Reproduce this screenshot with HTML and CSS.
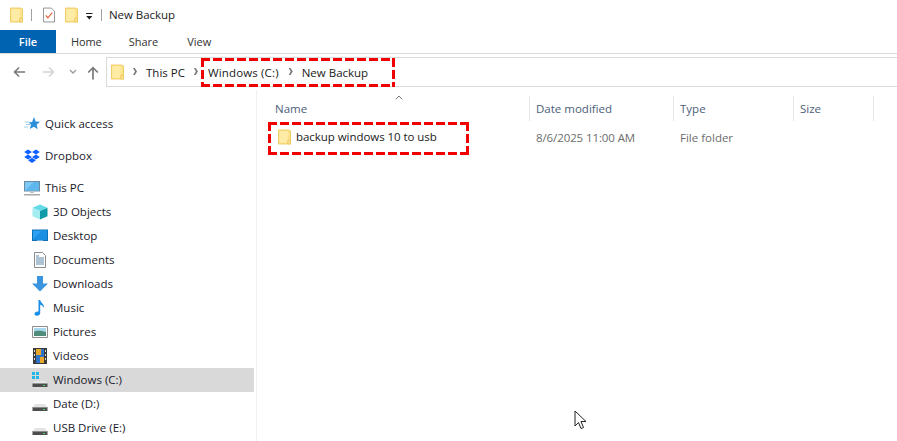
FILE: index.html
```html
<!DOCTYPE html>
<html lang="en">
<head>
<meta charset="utf-8">
<title>New Backup</title>
<link rel="stylesheet" href="styles.css">
</head>
<body>
<svg class="defs" width="0" height="0" aria-hidden="true">
  <symbol id="folder" viewBox="0 0 14 16">
    <path d="M.5.5h10.5l2.500 1v14H.5z" fill="#fde48c" stroke="#eec75c"/>
    <path d="M1.500 1.500h9v13h-9z" fill="#feeca6"/>
    <path d="M10.500 11.500h3v4h-3z" fill="#fde392" stroke="#eec75c"/>
  </symbol>
  <symbol id="drive" viewBox="0 0 16 16">
    <path d="M3 8h10l2.500 3.500h-15z" fill="#e4e4e4"/>
    <path d="M.5 11h15v4H.5z" fill="#4d4d4d"/>
    <path d="M1 11h14v1H1z" fill="#8a8a8a"/>
    <path d="M11 13h2v1h-2z" fill="#3ddc5a"/>
  </symbol>
</svg>

<div class="title-bar">
  <svg class="ico-folder"><use href="#folder"/></svg>
  <span class="sep sep-a"></span>
  <svg class="ico-check" viewBox="0 0 13 16">
    <path d="M.5.5h8.500l3.500 3.500v11.500H.5z" fill="#fff" stroke="#8c8c8c"/>
    <path d="M3 8.500l2.300 2.500L10 5.500" fill="none" stroke="#e2653a" stroke-width="1.300"/>
  </svg>
  <svg class="ico-folder ico-folder-b"><use href="#folder"/></svg>
  <svg class="ico-qat" viewBox="0 0 7 7">
    <path d="M0 0h6.500v1H0zM.2 3h6.200L3.300 6.500z" fill="#222"/>
  </svg>
  <span class="sep sep-b"></span>
  <span class="title-text">New Backup</span>
</div>

<div class="ribbon">
  <div class="tab tab-file">File</div>
  <div class="tab tab-home">Home</div>
  <div class="tab tab-share">Share</div>
  <div class="tab tab-view">View</div>
</div>

<div class="address-row">
  <svg class="nav-ico nav-back" viewBox="0 0 14 12"><path d="M13 6H2M6.500 1.200L1.700 6l4.800 4.800" fill="none" stroke="#7a7a7a" stroke-width="1.700"/></svg>
  <svg class="nav-ico nav-fwd" viewBox="0 0 14 12"><path d="M1 6h11M7.500 1.200L12.300 6l-4.800 4.800" fill="none" stroke="#d4d4d4" stroke-width="1.700"/></svg>
  <svg class="nav-chev" viewBox="0 0 8 5"><path d="M1 1l3 3 3-3" fill="none" stroke="#9a9a9a" stroke-width="1.300"/></svg>
  <svg class="nav-ico nav-up" viewBox="0 0 12 14"><path d="M6 13.500V2M1.200 6.500L6 1.700l4.800 4.800" fill="none" stroke="#7a7a7a" stroke-width="1.700"/></svg>
  <div class="address-box">
    <svg class="ico-folder"><use href="#folder"/></svg>
    <span class="crumb-arrow arrow-a"></span>
    <span class="crumb crumb-pc">This PC</span>
    <span class="crumb-arrow arrow-b"></span>
    <span class="crumb crumb-win">Windows (C:)</span>
    <span class="crumb-arrow arrow-c"></span>
    <span class="crumb crumb-new">New Backup</span>
  </div>
</div>

<div class="main">
  <nav class="nav">
    <div class="nav-row root">
      <svg class="tree-ico" viewBox="0 0 16 16"><path d="M10 1l1.700 4.500 4.300.3-3.400 2.900 1.200 4.600-3.900-2.500L5.800 13l1.200-4.400L4.500 6.500l3.600-.4z" fill="#2b8fd9"/><path d="M1 6h4M2 8.500h4M0 11h4" stroke="#9ccbea"/></svg>
      <span>Quick access</span>
    </div>
    <div class="nav-row root gap">
      <svg class="tree-ico" viewBox="0 0 16 16" fill="#0f62fe"><path d="M4 1.500L.2 4 4 6.500 8 4zM12 1.500L8 4l4 2.500L15.800 4zM4 6.500L.2 9 4 11.500 8 9zM12 6.500L8 9l4 2.500L15.800 9zM4 12.300L8 15l4-2.700-4-2.500z"/></svg>
      <span>Dropbox</span>
    </div>
    <div class="nav-row root gap">
      <svg class="tree-ico" viewBox="0 0 16 16"><path d="M0 1h16v10.500H0z" fill="#6c8ba3"/><path d="M1 2h14v8.500H1z" fill="#7cc8f6"/><path d="M1 10.500L10 2h5v8.500z" fill="#5fb6ec"/><path d="M6 11.500h4v1.500H6z" fill="#b8c4cc"/><path d="M0 14h16v1.500H0z" fill="#a8a8a8"/></svg>
      <span>This PC</span>
    </div>
    <div class="nav-row">
      <svg class="tree-ico" viewBox="0 0 16 16"><path d="M8 .5l7.500 3.200L8 7 .5 3.700z" fill="#63dbe6"/><path d="M.5 3.700L8 7v8.500L.5 12.300z" fill="#a3ecef"/><path d="M15.500 3.700L8 7v8.500l7.500-3.200z" fill="#119aa8"/></svg>
      <span>3D Objects</span>
    </div>
    <div class="nav-row">
      <svg class="tree-ico" viewBox="0 0 16 16"><path d="M0 1.500h16v11.500H0z" fill="#0c72b8"/><path d="M1 2.500h14v9H1z" fill="#2aa0f0"/><path d="M1 11.500l9-9h5v9z" fill="#1a8fe3"/><path d="M5 12.500h6v.5H5z" fill="#e6f2fb"/></svg>
      <span>Desktop</span>
    </div>
    <div class="nav-row">
      <svg class="tree-ico" viewBox="0 0 16 16"><path d="M2.500.5h8l3 3v12h-11z" fill="#fff" stroke="#8a8a8a"/><path d="M4 4h3M4 6h8M4 8h8M4 10h8M4 12h8" stroke="#5d88a8"/></svg>
      <span>Documents</span>
    </div>
    <div class="nav-row">
      <svg class="tree-ico" viewBox="0 0 16 16"><path d="M5 0h6v7.500h5L8 15.500 0 7.500h5z" fill="#3a94de"/></svg>
      <span>Downloads</span>
    </div>
    <div class="nav-row">
      <svg class="tree-ico" viewBox="0 0 16 16"><path d="M6.500 0h1.700c.3 3 4.800 4 3.500 8-.5-2-2-3-3.500-3.300V13c0 1.800-1.500 2.800-3.200 2.800C3.300 15.800 2.500 15 2.500 13.800c0-1.700 2-2.800 4-2.300z" fill="#1b8fe8"/></svg>
      <span>Music</span>
    </div>
    <div class="nav-row">
      <svg class="tree-ico" viewBox="0 0 16 16"><path d="M.5 2.500h15v11H.5z" fill="#fff" stroke="#8f8f8f"/><path d="M2 4h12v4H2z" fill="#a9d7ee"/><path d="M2 8c3-2 7-1 12 0v4H2z" fill="#4f8c7a"/></svg>
      <span>Pictures</span>
    </div>
    <div class="nav-row">
      <svg class="tree-ico" viewBox="0 0 16 16"><path d="M1 0h14v16H1z" fill="#3a3a3a"/><path d="M4 1h8v14H4z" fill="#2f74c8"/><path d="M4 1h5v6H4z" fill="#e8a92a"/><path d="M8 9h4v6H8z" fill="#e8a92a"/><path d="M2 2h1v2H2zM2 6h1v2H2zM2 10h1v2H2zM13 2h1v2h-1zM13 6h1v2h-1zM13 10h1v2h-1z" fill="#ddd"/></svg>
      <span>Videos</span>
    </div>
    <div class="nav-row selected">
      <svg class="tree-ico" viewBox="0 0 16 16"><path d="M0 0h3v3H0zM4 0h3v3H4zM0 4h3v3H0zM4 4h3v3H4z" fill="#1fb6e8"/><path d="M3 9h10l2.500 2.500H.5z" fill="#e8e8e8"/><path d="M.5 11.500h15V15H.5z" fill="#4d4d4d"/><path d="M11 13h2v1h-2z" fill="#3ddc5a"/></svg>
      <span>Windows (C:)</span>
    </div>
    <div class="nav-row">
      <svg class="tree-ico"><use href="#drive"/></svg>
      <span>Date (D:)</span>
    </div>
    <div class="nav-row">
      <svg class="tree-ico"><use href="#drive"/></svg>
      <span>USB Drive (E:)</span>
    </div>
  </nav>

  <section class="files">
    <svg class="sort-caret" viewBox="0 0 8 5"><path d="M.8 4.300L4 1l3.200 3.300" fill="none" stroke="#777"/></svg>
    <div class="header-row">
      <div class="col col-name">Name</div>
      <div class="col col-date">Date modified</div>
      <div class="col col-type">Type</div>
      <div class="col col-size">Size</div>
    </div>
    <div class="file-row">
      <div class="cell col-name name-cell">
        <svg class="ico-folder"><use href="#folder"/></svg>
        <span>backup windows 10 to usb</span>
      </div>
      <div class="cell col-date cell-date">8/6/2025 11:00 AM</div>
      <div class="cell col-type cell-type">File folder</div>
    </div>
  </section>
</div>

<div class="mark mark-path"></div>
<div class="mark mark-file"></div>
<svg class="cursor" viewBox="0 0 13 20"><path d="M1 1v15l3.500-3.500 2.500 6 2.500-1-2.500-6h5z" fill="#fff" stroke="#222" stroke-width="1"/></svg>
</body>
</html>
```
FILE: styles.css
```css
* { box-sizing: border-box; }
html, body { margin: 0; padding: 0; }
body {
  width: 897px;
  height: 441px;
  overflow: hidden;
  position: relative;
  background: #fff;
  font-family: "Open Sans", "Noto Sans", sans-serif;
  font-size: 11.5px;
  color: #1a1a1a;
}
svg { display: block; flex: none; }
.defs { position: absolute; }

.ico-folder { width: 13px; height: 16px; }

.title-bar {
  height: 30px;
  display: flex;
  align-items: center;
  padding-left: 10px;
}
.sep { width: 1px; height: 12px; background: #a0a0a0; }
.sep-a { margin-left: 8px; }
.ico-check { width: 12px; height: 16px; margin-left: 11px; }
.ico-folder-b { margin-left: 10px; }
.ico-qat { width: 7px; height: 7px; margin-left: 8px; margin-top: 2px; }
.sep-b { margin-left: 8px; }
.title-text { margin-left: 7px; margin-bottom: 2px; font-size: 11.5px; color: #222; letter-spacing: -0.05px; }

.ribbon {
  height: 24px;
  display: flex;
  border-bottom: 1px solid #dadada;
}
.tab {
  height: 23px;
  display: flex;
  align-items: center;
  color: #333;
  font-size: 11px;
}
.tab-file {
  width: 56px;
  justify-content: center;
  background: #0063b1;
  color: #fff;
  font-weight: 600;
}
.tab-home { margin-left: 15px; letter-spacing: -0.1px; }
.tab-share { margin-left: 27px; }
.tab-view { margin-left: 29px; }

.address-row {
  height: 36px;
  display: flex;
  align-items: center;
  padding: 0 0 1px 13px;
}
.nav-ico { width: 13px; height: 12px; }
.nav-fwd { margin-left: 16px; }
.nav-chev { width: 8px; height: 5px; margin-left: 14px; }
.nav-up { width: 12px; height: 14px; margin-left: 10px; margin-top: 2px; }
.address-box {
  margin-left: 7px;
  flex: 1;
  height: 30px;
  border: 1px solid #d9d9d9;
  border-right: 0;
  display: flex;
  align-items: center;
  padding-left: 4px;
}
.crumb { color: #1a1a1a; font-size: 11.5px; white-space: nowrap; margin-top: 2px; }
.crumb-arrow {
  width: 4px;
  height: 7px;
  flex: none;
  background: #777;
  clip-path: polygon(0 0, 45% 0, 100% 50%, 45% 100%, 0 100%, 50% 50%);
}
.arrow-a { margin-left: 9px; }
.crumb-pc { margin-left: 9px; }
.arrow-b { margin-left: 9px; }
.crumb-win { margin-left: 10px; letter-spacing: 0.15px; }
.arrow-c { margin-left: 10px; }
.crumb-new { margin-left: 9px; }

.main {
  display: flex;
  height: 351px;
}
.nav {
  width: 257px;
  flex: none;
  padding: 22px 2px 0 0;
  border-right: 1px solid #efefef;
  overflow: hidden;
}
.nav-row {
  height: 24px;
  display: flex;
  align-items: center;
  padding-left: 32px;
  white-space: nowrap;
  color: #1a1a2a;
}
.nav-row span { margin-left: 5px; margin-bottom: 2px; }
.tree-ico { width: 16px; height: 16px; }
.root { padding-left: 24px; }
.gap { margin-top: 8px; }
.selected { background: #d9d9d9; }

.files {
  flex: 1;
  position: relative;
  min-width: 0;
}
.sort-caret {
  position: absolute;
  left: 138px;
  top: 5px;
  width: 8px;
  height: 5px;
}
.header-row {
  display: flex;
  height: 25px;
  margin-top: 6px;
}
.col {
  height: 25px;
  display: flex;
  align-items: center;
  color: #4c607a;
  border-right: 1px solid #e5e5e5;
}
.col-name { width: 273px; padding-left: 18px; flex: none; }
.col-date { width: 144px; padding-left: 6px; flex: none; }
.col-type { width: 120px; padding-left: 6px; flex: none; }
.col-size { width: 80px; padding-left: 6px; flex: none; }

.file-row {
  display: flex;
  align-items: center;
  height: 22px;
  margin-top: 5px;
}
.cell { color: #6d6d6d; }
.cell-date { letter-spacing: -0.1px; }
.name-cell {
  display: flex;
  align-items: center;
  padding-left: 21px;
  color: #1a1a1a;
}
.name-cell span { margin-left: 5px; margin-bottom: 1px; white-space: nowrap; letter-spacing: -0.05px; }

.mark {
  position: absolute;
  background:
    repeating-linear-gradient(90deg, #f00000 0 9px, transparent 9px 12px) top / 100% 3px no-repeat,
    repeating-linear-gradient(90deg, #f00000 0 9px, transparent 9px 12px) bottom / 100% 3px no-repeat,
    repeating-linear-gradient(180deg, #f00000 0 9px, transparent 9px 12px) left / 3px 100% no-repeat,
    repeating-linear-gradient(180deg, #f00000 0 9px, transparent 9px 12px) right / 3px 100% no-repeat;
}
.mark-path { left: 201px; top: 58px; width: 194px; height: 29px; }
.mark-file { left: 268px; top: 122px; width: 201px; height: 33px; }
.cursor {
  position: absolute;
  left: 574px;
  top: 410px;
  width: 13px;
  height: 20px;
}
```
